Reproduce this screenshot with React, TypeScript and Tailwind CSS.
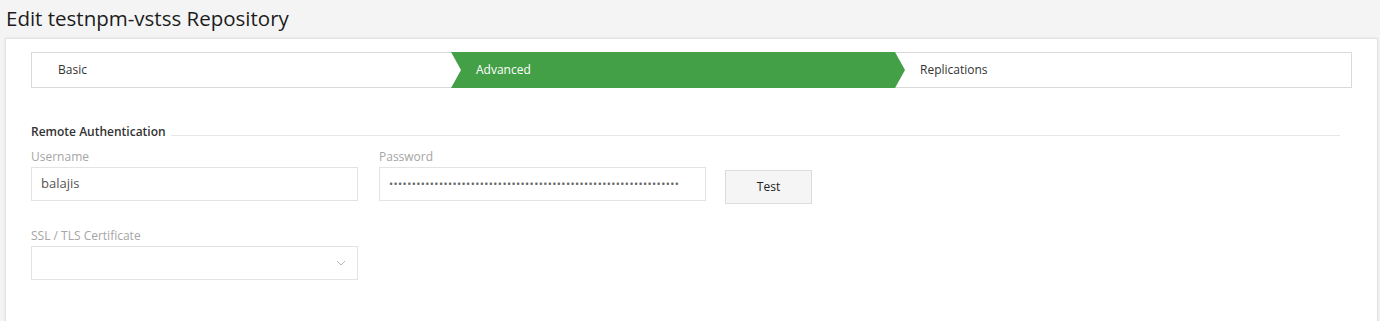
import React from "react";

const font = { fontFamily: '"Open Sans", "Noto Sans", sans-serif' };

export default function App() {
  const dots = "•".repeat(64);
  return (
    <div className="h-[321px] w-[1380px] bg-[#f4f4f4] overflow-hidden" style={font}>
      <h1 className="pl-[6px] pt-[4px] h-[38px] text-[20.5px] leading-[28px] text-[#1c1c1c] font-normal">
        Edit testnpm-vstss Repository
      </h1>
      <div className="ml-[5px] mr-[2px] bg-white border border-[#e2e2e2] shadow-[0_0_3px_rgba(0,0,0,0.08)] pl-[25px] pr-[25px] pt-[13px] pb-[80px]">
        {/* Stepper */}
        <div className="flex h-[36px] border border-[#d9d9d9] text-[12px] leading-none">
          <div className="w-[419px] flex items-center pl-[26px] text-[#333]">Basic</div>
          <div
            className="w-[454px] -my-[1px] flex items-center pl-[25px] bg-[#43a047] text-white"
            style={{ clipPath: "polygon(0 0, 444px 0, 454px 50%, 444px 100%, 0 100%, 10px 50%)" }}
          >
            Advanced
          </div>
          <div className="flex-1 flex items-center pl-[15px] text-[#333]">Replications</div>
        </div>

        {/* Section header */}
        <div className="mt-[36px] flex items-center pr-[12px]">
          <span className="text-[12px] leading-[16px] font-semibold text-[#333]">Remote Authentication</span>
          <div className="flex-1 ml-[5px] mt-[6px] h-px bg-[#e6e6e6]" />
        </div>

        <div className="mt-[9px] flex items-start">
          <div className="w-[327px]">
            <div className="text-[12px] leading-[16px] text-[#a5a5a5]">Username</div>
            <div className="mt-[2px] h-[34px] border border-[#e3e3e3] flex items-center pl-[9px] text-[13px] text-[#555]">
              balajis
            </div>
          </div>
          <div className="w-[327px] ml-[21px]">
            <div className="text-[12px] leading-[16px] text-[#a5a5a5]">Password</div>
            <div className="mt-[2px] h-[34px] border border-[#e3e3e3] flex items-center pl-[9px] text-[11px] tracking-[0.4px] text-[#666] overflow-hidden whitespace-nowrap">
              {dots}
            </div>
          </div>
          <button className="ml-[19px] mt-[21px] w-[87px] h-[34px] border border-[#dcdcdc] bg-[#f5f5f5] text-[12px] text-[#222]">
            Test
          </button>
        </div>

        <div className="mt-[24px] w-[327px]">
          <div className="text-[12px] leading-[16px] text-[#a5a5a5]">SSL / TLS Certificate</div>
          <div className="mt-[2px] h-[34px] border border-[#e3e3e3] flex items-center justify-end pr-[11px]">
            <svg width="10" height="6" viewBox="0 0 10 6" fill="none">
              <path d="M1 1l4 4 4-4" stroke="#b5b5b5" strokeWidth="1" />
            </svg>
          </div>
        </div>
      </div>
    </div>
  );
}
